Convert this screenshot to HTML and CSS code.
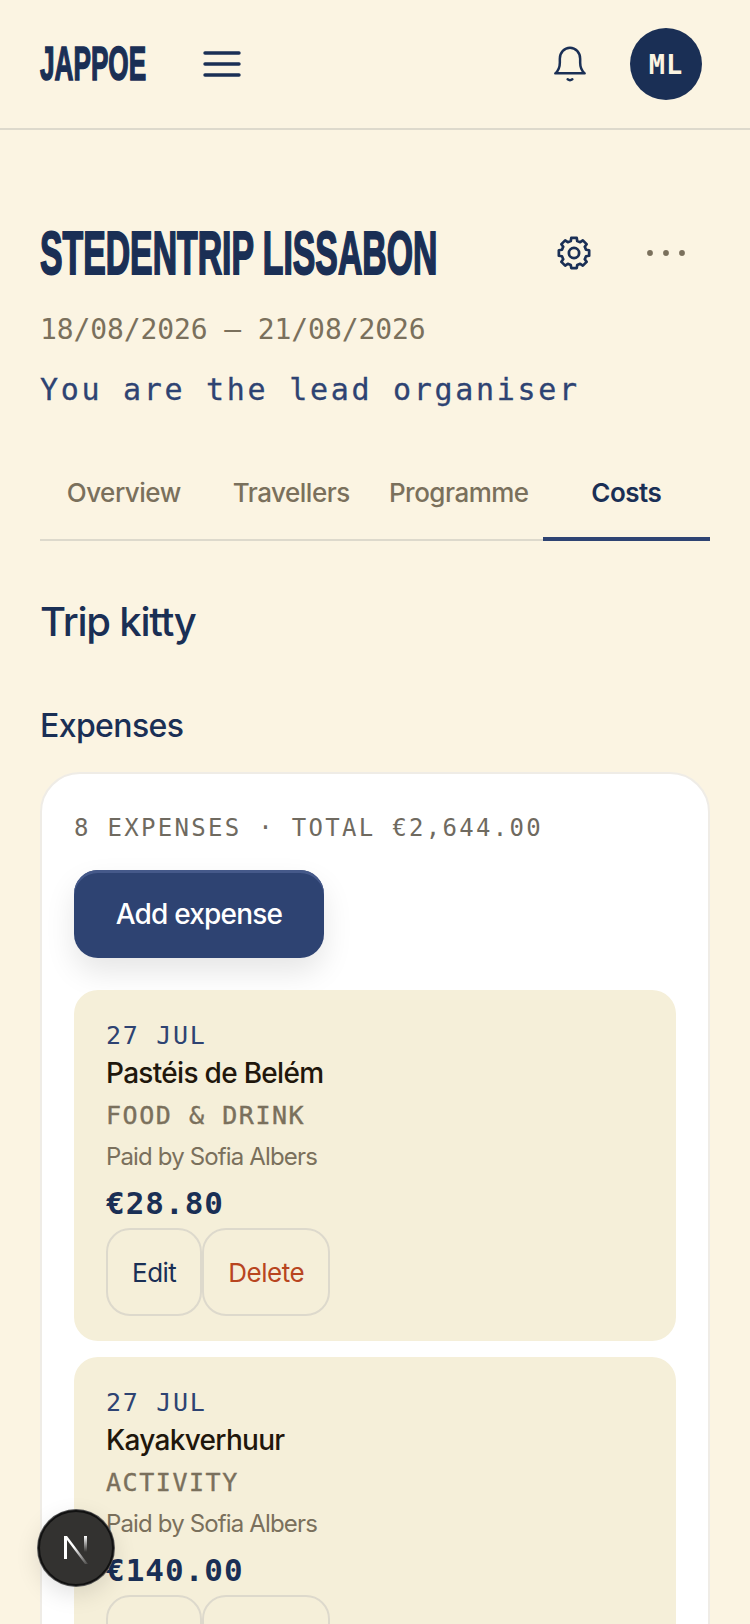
FILE: index.html
```html
<!DOCTYPE html>
<html lang="en">
<head>
    <meta charset="UTF-8">
    <meta name="viewport" content="width=device-width, initial-scale=1.0">
    <title>Jappoe - Stedentrip Lissabon</title>
    <link rel="stylesheet" href="styles.css">
</head>
<body>
    <header class="topbar">
        <div class="topbar-left">
            <div class="logo"><span class="squeeze">JAPPOE</span></div>
            <button class="icon-btn" aria-label="Menu">
                <svg width="38" height="28" viewBox="0 0 38 28" fill="none" stroke="#1a2f55" stroke-width="3.4" stroke-linecap="round">
                    <line x1="2" y1="3" x2="36" y2="3"/>
                    <line x1="2" y1="14" x2="36" y2="14"/>
                    <line x1="2" y1="25" x2="36" y2="25"/>
                </svg>
            </button>
        </div>
        <div class="topbar-right">
            <button class="icon-btn" aria-label="Notifications">
                <svg width="40" height="40" viewBox="0 0 24 24" fill="none" stroke="#1a2f55" stroke-width="1.5" stroke-linecap="round" stroke-linejoin="round">
                    <path d="M3.2 17.6h17.6c-1.8-1.6-2.7-3.4-2.7-6.4V8.8a6.1 6.6 0 0 0-12.2 0v2.4c0 3-.9 4.8-2.7 6.4z"/>
                    <path d="M10.6 21.2c.8.6 2 .6 2.8 0"/>
                </svg>
            </button>
            <div class="avatar">ML</div>
        </div>
    </header>

    <main class="page">
        <div class="trip-head">
            <h1 class="trip-title"><span class="squeeze">STEDENTRIP LISSABON</span></h1>
            <div class="trip-actions">
                <svg width="36" height="36" viewBox="0 0 24 24" fill="none" stroke="#1a2f55" stroke-width="1.8" stroke-linejoin="round">
                    <path d="M13.82 1.9L14.15 3.98L16.15 4.81L17.9 3.6L20.4 6.1L19.19 7.85L20.02 9.85L22.1 10.18L22.1 13.82L20.02 14.15L19.19 16.15L20.4 17.9L17.9 20.4L16.15 19.19L14.15 20.02L13.82 22.1L10.18 22.1L9.85 20.02L7.85 19.19L6.1 20.4L3.6 17.9L4.81 16.15L3.98 14.15L1.9 13.82L1.9 10.18L3.98 9.85L4.81 7.85L3.6 6.1L6.1 3.6L7.85 4.81L9.85 3.98L10.18 1.9Z"/>
                    <circle cx="12" cy="12" r="3.4"/>
                </svg>
                <svg class="dots" width="38" height="10" viewBox="0 0 38 10" fill="#7a705c">
                    <circle cx="3" cy="5" r="2.9"/>
                    <circle cx="19" cy="5" r="2.9"/>
                    <circle cx="35" cy="5" r="2.9"/>
                </svg>
            </div>
        </div>
        <p class="trip-dates">18/08/2026 – 21/08/2026</p>
        <p class="trip-role">You are the lead organiser</p>

        <nav class="tabs">
            <a class="tab">Overview</a>
            <a class="tab">Travellers</a>
            <a class="tab">Programme</a>
            <a class="tab active">Costs</a>
        </nav>

        <h2 class="section-title">Trip kitty</h2>
        <h3 class="sub-title">Expenses</h3>

        <section class="card">
            <p class="summary">8 EXPENSES · TOTAL €2,644.00</p>
            <button class="btn-primary">Add expense</button>

            <div class="expense-list">
                <article class="expense">
                    <div class="expense-date">27 JUL</div>
                    <div class="expense-name">Pastéis de Belém</div>
                    <div class="expense-cat">FOOD &amp; DRINK</div>
                    <div class="expense-paid">Paid by Sofia Albers</div>
                    <div class="expense-amount">€28.80</div>
                    <div class="expense-actions">
                        <button class="btn-small">Edit</button>
                        <button class="btn-small danger">Delete</button>
                    </div>
                </article>
                <article class="expense">
                    <div class="expense-date">27 JUL</div>
                    <div class="expense-name">Kayakverhuur</div>
                    <div class="expense-cat">ACTIVITY</div>
                    <div class="expense-paid">Paid by Sofia Albers</div>
                    <div class="expense-amount">€140.00</div>
                    <div class="expense-actions">
                        <button class="btn-small">Edit</button>
                        <button class="btn-small danger">Delete</button>
                    </div>
                </article>
            </div>
        </section>
    </main>

    <div class="dev-badge">
        <svg width="40" height="40" viewBox="0 0 40 40" fill="none">
            <defs>
                <linearGradient id="fade" x1="0" y1="0" x2="1" y2="1">
                    <stop offset="0.4" stop-color="#fff"/>
                    <stop offset="1" stop-color="#fff" stop-opacity="0.1"/>
                </linearGradient>
                <linearGradient id="fadeUp" x1="0" y1="0" x2="0" y2="1">
                    <stop offset="0" stop-color="#fff"/>
                    <stop offset="1" stop-color="#fff" stop-opacity="0"/>
                </linearGradient>
            </defs>
            <rect x="8" y="8" width="3" height="23" fill="#fff"/>
            <polygon points="8,8 11,8 32,36 29,36" fill="url(#fade)"/>
            <rect x="28" y="8" width="3" height="16" fill="url(#fadeUp)"/>
        </svg>
    </div>
</body>
</html>
```

FILE: styles.css
```css
* {
    box-sizing: border-box;
}

html, body {
    height: 1624px;
    overflow: hidden;
}

body {
    margin: 0;
    background-color: #fbf4e2;
    color: #1a2f55;
    font-family: 'Inter', 'Liberation Sans', sans-serif;
}

p, h1, h2, h3 {
    margin: 0;
}

button {
    font-family: inherit;
    cursor: pointer;
}

.squeeze {
    display: inline-block;
    transform: scaleX(0.545);
    transform-origin: left center;
    white-space: nowrap;
}

.topbar {
    height: 130px;
    padding: 0 48px 0 40px;
    border-bottom: 2px solid #ddd9cc;
    display: flex;
    align-items: center;
    justify-content: space-between;
}

.topbar-left,
.topbar-right {
    display: flex;
    align-items: center;
}

.logo {
    width: 163px;
    font-family: 'Liberation Sans', sans-serif;
    font-size: 48px;
    font-weight: 700;
    line-height: 1;
    -webkit-text-stroke: 1.6px #1a2f55;
}

.icon-btn {
    padding: 0;
    border: 0;
    background: none;
    display: flex;
}

.topbar-right .icon-btn {
    margin-right: 40px;
}

.avatar {
    width: 72px;
    height: 72px;
    border-radius: 50%;
    background-color: #1a2f55;
    color: #fbf4e2;
    font-family: 'DejaVu Sans Mono', monospace;
    font-size: 27px;
    font-weight: 700;
    letter-spacing: 1px;
    display: flex;
    align-items: center;
    justify-content: center;
}

.page {
    padding: 93px 40px 0;
}

.trip-head {
    display: flex;
    align-items: center;
    justify-content: space-between;
    height: 60px;
}

.trip-title {
    font-family: 'Liberation Sans', sans-serif;
    font-size: 62px;
    font-weight: 700;
    line-height: 60px;
    -webkit-text-stroke: 2px #1a2f55;
    flex: 1;
    min-width: 0;
}

.trip-actions {
    display: flex;
    align-items: center;
    gap: 55px;
    padding-right: 25px;
}

.trip-dates {
    margin-top: 27px;
    color: #7a705c;
    font-family: 'DejaVu Sans Mono', monospace;
    font-size: 28px;
    line-height: 40px;
    letter-spacing: -0.1px;
}

.trip-role {
    margin-top: 18px;
    color: #2e4372;
    font-family: 'DejaVu Sans Mono', monospace;
    font-size: 30px;
    line-height: 44px;
    letter-spacing: 2.7px;
    -webkit-text-stroke: 0.3px #2e4372;
}

.tabs {
    margin-top: 46px;
    display: grid;
    grid-template-columns: repeat(4, 1fr);
    border-bottom: 2px solid #ddd9cc;
}

.tab {
    height: 83px;
    padding-bottom: 11px;
    margin-bottom: -2px;
    border-bottom: 4px solid transparent;
    color: #7a705c;
    font-size: 26px;
    font-weight: 500;
    letter-spacing: -0.5px;
    display: flex;
    align-items: center;
    justify-content: center;
}

.tab.active {
    color: #1a2f55;
    font-weight: 600;
    border-bottom-color: #2e4372;
}

.section-title {
    margin-top: 53px;
    font-size: 40px;
    font-weight: 500;
    line-height: 56px;
    letter-spacing: -1.2px;
}

.sub-title {
    margin-top: 55px;
    font-size: 32px;
    font-weight: 500;
    line-height: 42px;
    letter-spacing: -0.6px;
}

.card {
    margin-top: 25px;
    padding: 36px 32px 32px;
    background-color: #fff;
    border: 2px solid #efece6;
    border-radius: 40px;
}

.summary {
    color: #6f6a60;
    font-family: 'DejaVu Sans Mono', monospace;
    font-size: 24px;
    line-height: 36px;
    letter-spacing: 2.3px;
}

.btn-primary {
    margin-top: 24px;
    width: 250px;
    height: 88px;
    background-color: #2e4372;
    border: 0;
    border-radius: 24px;
    box-shadow: inset 0 3px 0 #45598a, 0 14px 30px rgba(0, 0, 0, 0.1);
    color: #fff;
    font-size: 28px;
    font-weight: 500;
    letter-spacing: -0.8px;
}

.expense-list {
    margin-top: 32px;
    display: flex;
    flex-direction: column;
    gap: 16px;
}

.expense {
    padding: 31px 32px 25px;
    background-color: #f5efd9;
    border-radius: 24px;
}

.expense-date {
    color: #2e4372;
    font-family: 'DejaVu Sans Mono', monospace;
    font-size: 25px;
    line-height: 30px;
    letter-spacing: 1.7px;
}

.expense-name {
    margin-top: 3px;
    color: #1f170c;
    font-size: 28px;
    font-weight: 500;
    line-height: 38px;
    letter-spacing: -0.7px;
}

.expense-cat {
    margin-top: 6px;
    color: #7a705c;
    font-family: 'DejaVu Sans Mono', monospace;
    font-size: 25px;
    line-height: 36px;
    letter-spacing: 1.55px;
    -webkit-text-stroke: 0.4px #7a705c;
}

.expense-paid {
    margin-top: 6px;
    color: #7a705c;
    font-size: 24px;
    line-height: 34px;
    letter-spacing: -0.85px;
}

.expense-amount {
    margin-top: 7px;
    font-family: 'DejaVu Sans Mono', monospace;
    font-size: 31px;
    font-weight: 700;
    line-height: 44px;
    letter-spacing: 1px;
}

.expense-actions {
    margin-top: 3px;
    display: flex;
    gap: 0;
}

.btn-small {
    height: 88px;
    padding: 0 24px;
    background: none;
    border: 2px solid #ddd9cc;
    border-radius: 24px;
    color: #1a2f55;
    font-size: 26px;
    letter-spacing: -0.5px;
}

.btn-small.danger {
    color: #b8451f;
}

.dev-badge {
    position: fixed;
    left: 38px;
    top: 1510px;
    width: 76px;
    height: 76px;
    border-radius: 50%;
    background-color: #333230;
    border: 2px solid #111;
    box-shadow: 0 0 0 1px #555, 0 8px 24px rgba(0, 0, 0, 0.12);
    display: flex;
    align-items: center;
    justify-content: center;
}
```
